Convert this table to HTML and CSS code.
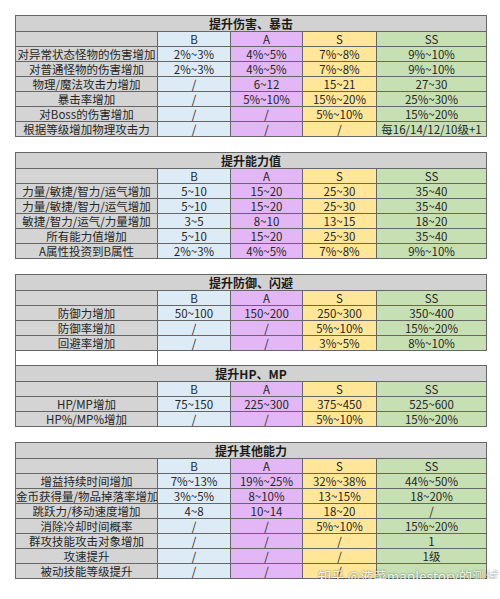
FILE: index.html
```html
<!DOCTYPE html>
<html lang="zh">
<head>
    <meta charset="UTF-8">
    <title>潜能属性表</title>
    <link rel="stylesheet" href="styles.css">
</head>
<body>
    <div class="sheet">
        <table class="grid">
            <colgroup><col class="c-label"><col class="c-b"><col class="c-a"><col class="c-s"><col class="c-ss"></colgroup>
            <tr class="title"><td colspan="5">提升伤害、暴击</td></tr>
            <tr class="head"><td class="lbl"></td><td class="b">B</td><td class="a">A</td><td class="s">S</td><td class="ss">SS</td></tr>
            <tr><td class="lbl">对异常状态怪物的伤害增加</td><td class="b">2%~3%</td><td class="a">4%~5%</td><td class="s">7%~8%</td><td class="ss">9%~10%</td></tr>
            <tr><td class="lbl">对普通怪物的伤害增加</td><td class="b">2%~3%</td><td class="a">4%~5%</td><td class="s">7%~8%</td><td class="ss">9%~10%</td></tr>
            <tr><td class="lbl">物理/魔法攻击力增加</td><td class="b">/</td><td class="a">6~12</td><td class="s">15~21</td><td class="ss">27~30</td></tr>
            <tr><td class="lbl">暴击率增加</td><td class="b">/</td><td class="a">5%~10%</td><td class="s">15%~20%</td><td class="ss">25%~30%</td></tr>
            <tr><td class="lbl">对Boss的伤害增加</td><td class="b">/</td><td class="a">/</td><td class="s">5%~10%</td><td class="ss">15%~20%</td></tr>
            <tr><td class="lbl">根据等级增加物理攻击力</td><td class="b">/</td><td class="a">/</td><td class="s">/</td><td class="ss">每16/14/12/10级+1</td></tr>
        </table>

        <table class="grid">
            <colgroup><col class="c-label"><col class="c-b"><col class="c-a"><col class="c-s"><col class="c-ss"></colgroup>
            <tr class="title"><td colspan="5">提升能力值</td></tr>
            <tr class="head"><td class="lbl"></td><td class="b">B</td><td class="a">A</td><td class="s">S</td><td class="ss">SS</td></tr>
            <tr><td class="lbl">力量/敏捷/智力/运气增加</td><td class="b">5~10</td><td class="a">15~20</td><td class="s">25~30</td><td class="ss">35~40</td></tr>
            <tr><td class="lbl">力量/敏捷/智力/运气增加</td><td class="b">5~10</td><td class="a">15~20</td><td class="s">25~30</td><td class="ss">35~40</td></tr>
            <tr><td class="lbl">敏捷/智力/运气/力量增加</td><td class="b">3~5</td><td class="a">8~10</td><td class="s">13~15</td><td class="ss">18~20</td></tr>
            <tr><td class="lbl">所有能力值增加</td><td class="b">5~10</td><td class="a">15~20</td><td class="s">25~30</td><td class="ss">35~40</td></tr>
            <tr><td class="lbl">A属性投资到B属性</td><td class="b">2%~3%</td><td class="a">4%~5%</td><td class="s">7%~8%</td><td class="ss">9%~10%</td></tr>
        </table>

        <table class="grid">
            <colgroup><col class="c-label"><col class="c-b"><col class="c-a"><col class="c-s"><col class="c-ss"></colgroup>
            <tr class="title"><td colspan="5">提升防御、闪避</td></tr>
            <tr class="head"><td class="lbl"></td><td class="b">B</td><td class="a">A</td><td class="s">S</td><td class="ss">SS</td></tr>
            <tr><td class="lbl">防御力增加</td><td class="b">50~100</td><td class="a">150~200</td><td class="s">250~300</td><td class="ss">350~400</td></tr>
            <tr><td class="lbl">防御率增加</td><td class="b">/</td><td class="a">/</td><td class="s">5%~10%</td><td class="ss">15%~20%</td></tr>
            <tr><td class="lbl">回避率增加</td><td class="b">/</td><td class="a">/</td><td class="s">3%~5%</td><td class="ss">8%~10%</td></tr>
            <tr class="blank"><td class="empty"></td><td class="empty open" colspan="4"></td></tr>
            <tr class="title"><td colspan="5">提升HP、MP</td></tr>
            <tr class="head"><td class="lbl"></td><td class="b">B</td><td class="a">A</td><td class="s">S</td><td class="ss">SS</td></tr>
            <tr><td class="lbl">HP/MP增加</td><td class="b">75~150</td><td class="a">225~300</td><td class="s">375~450</td><td class="ss">525~600</td></tr>
            <tr><td class="lbl">HP%/MP%增加</td><td class="b">/</td><td class="a">/</td><td class="s">5%~10%</td><td class="ss">15%~20%</td></tr>
        </table>

        <table class="grid">
            <colgroup><col class="c-label"><col class="c-b"><col class="c-a"><col class="c-s"><col class="c-ss"></colgroup>
            <tr class="title"><td colspan="5">提升其他能力</td></tr>
            <tr class="head"><td class="lbl"></td><td class="b">B</td><td class="a">A</td><td class="s">S</td><td class="ss">SS</td></tr>
            <tr><td class="lbl">增益持续时间增加</td><td class="b">7%~13%</td><td class="a">19%~25%</td><td class="s">32%~38%</td><td class="ss">44%~50%</td></tr>
            <tr><td class="lbl">金币获得量/物品掉落率增加</td><td class="b">3%~5%</td><td class="a">8~10%</td><td class="s">13~15%</td><td class="ss">18~20%</td></tr>
            <tr><td class="lbl">跳跃力/移动速度增加</td><td class="b">4~8</td><td class="a">10~14</td><td class="s">18~20</td><td class="ss">/</td></tr>
            <tr><td class="lbl">消除冷却时间概率</td><td class="b">/</td><td class="a">/</td><td class="s">5%~10%</td><td class="ss">15%~20%</td></tr>
            <tr><td class="lbl">群攻技能攻击对象增加</td><td class="b">/</td><td class="a">/</td><td class="s">/</td><td class="ss">1</td></tr>
            <tr><td class="lbl">攻速提升</td><td class="b">/</td><td class="a">/</td><td class="s">/</td><td class="ss">1级</td></tr>
            <tr><td class="lbl">被动技能等级提升</td><td class="b">/</td><td class="a">/</td><td class="s">/</td><td class="ss"></td></tr>
        </table>

        <div class="mark">知乎 @液菜maplestory的测试</div>
    </div>
</body>
</html>
```

FILE: styles.css
```css
body {
    margin: 0;
    background: #fff;
    font-family: "Noto Sans CJK SC", "Noto Sans", sans-serif;
    color: #262626;
}
.sheet {
    width: 470px;
    padding: 15px 0 0 15px;
    display: flex;
    flex-direction: column;
    gap: 15px;
    position: relative;
}
.grid {
    border-collapse: collapse;
    table-layout: fixed;
    width: 471px;
    font-size: 11.5px;
}
.c-label { width: 142px; }
.c-b { width: 73px; }
.c-a { width: 72px; }
.c-s { width: 74px; }
.c-ss { width: 110px; }

.grid td {
    border: 1px solid #666;
    height: 14px;
    padding: 0;
    line-height: 14px;
    text-align: center;
    white-space: nowrap;
    overflow: hidden;
}
.grid .title td {
    background: #d2d2d2;
    height: 15px;
    font-size: 12px;
    font-weight: bold;
    color: #1a1a1a;
}
.lbl { background: #d4d4d4; }
.b { background: #ddebf7; }
.a { background: #e3b6f5; }
.s { background: #ffe699; }
.ss { background: #c6e0b4; }

.grid .blank td {
    background: #fff;
}
.grid .blank .open {
    border-right-color: #fff;
}

.mark {
    position: absolute;
    left: 318px;
    top: 566px;
    font-size: 13px;
    letter-spacing: 0.3px;
    color: rgba(255, 255, 255, 0.92);
    text-shadow: 0 0 2px rgba(0, 0, 0, 0.6);
    white-space: nowrap;
}
```
